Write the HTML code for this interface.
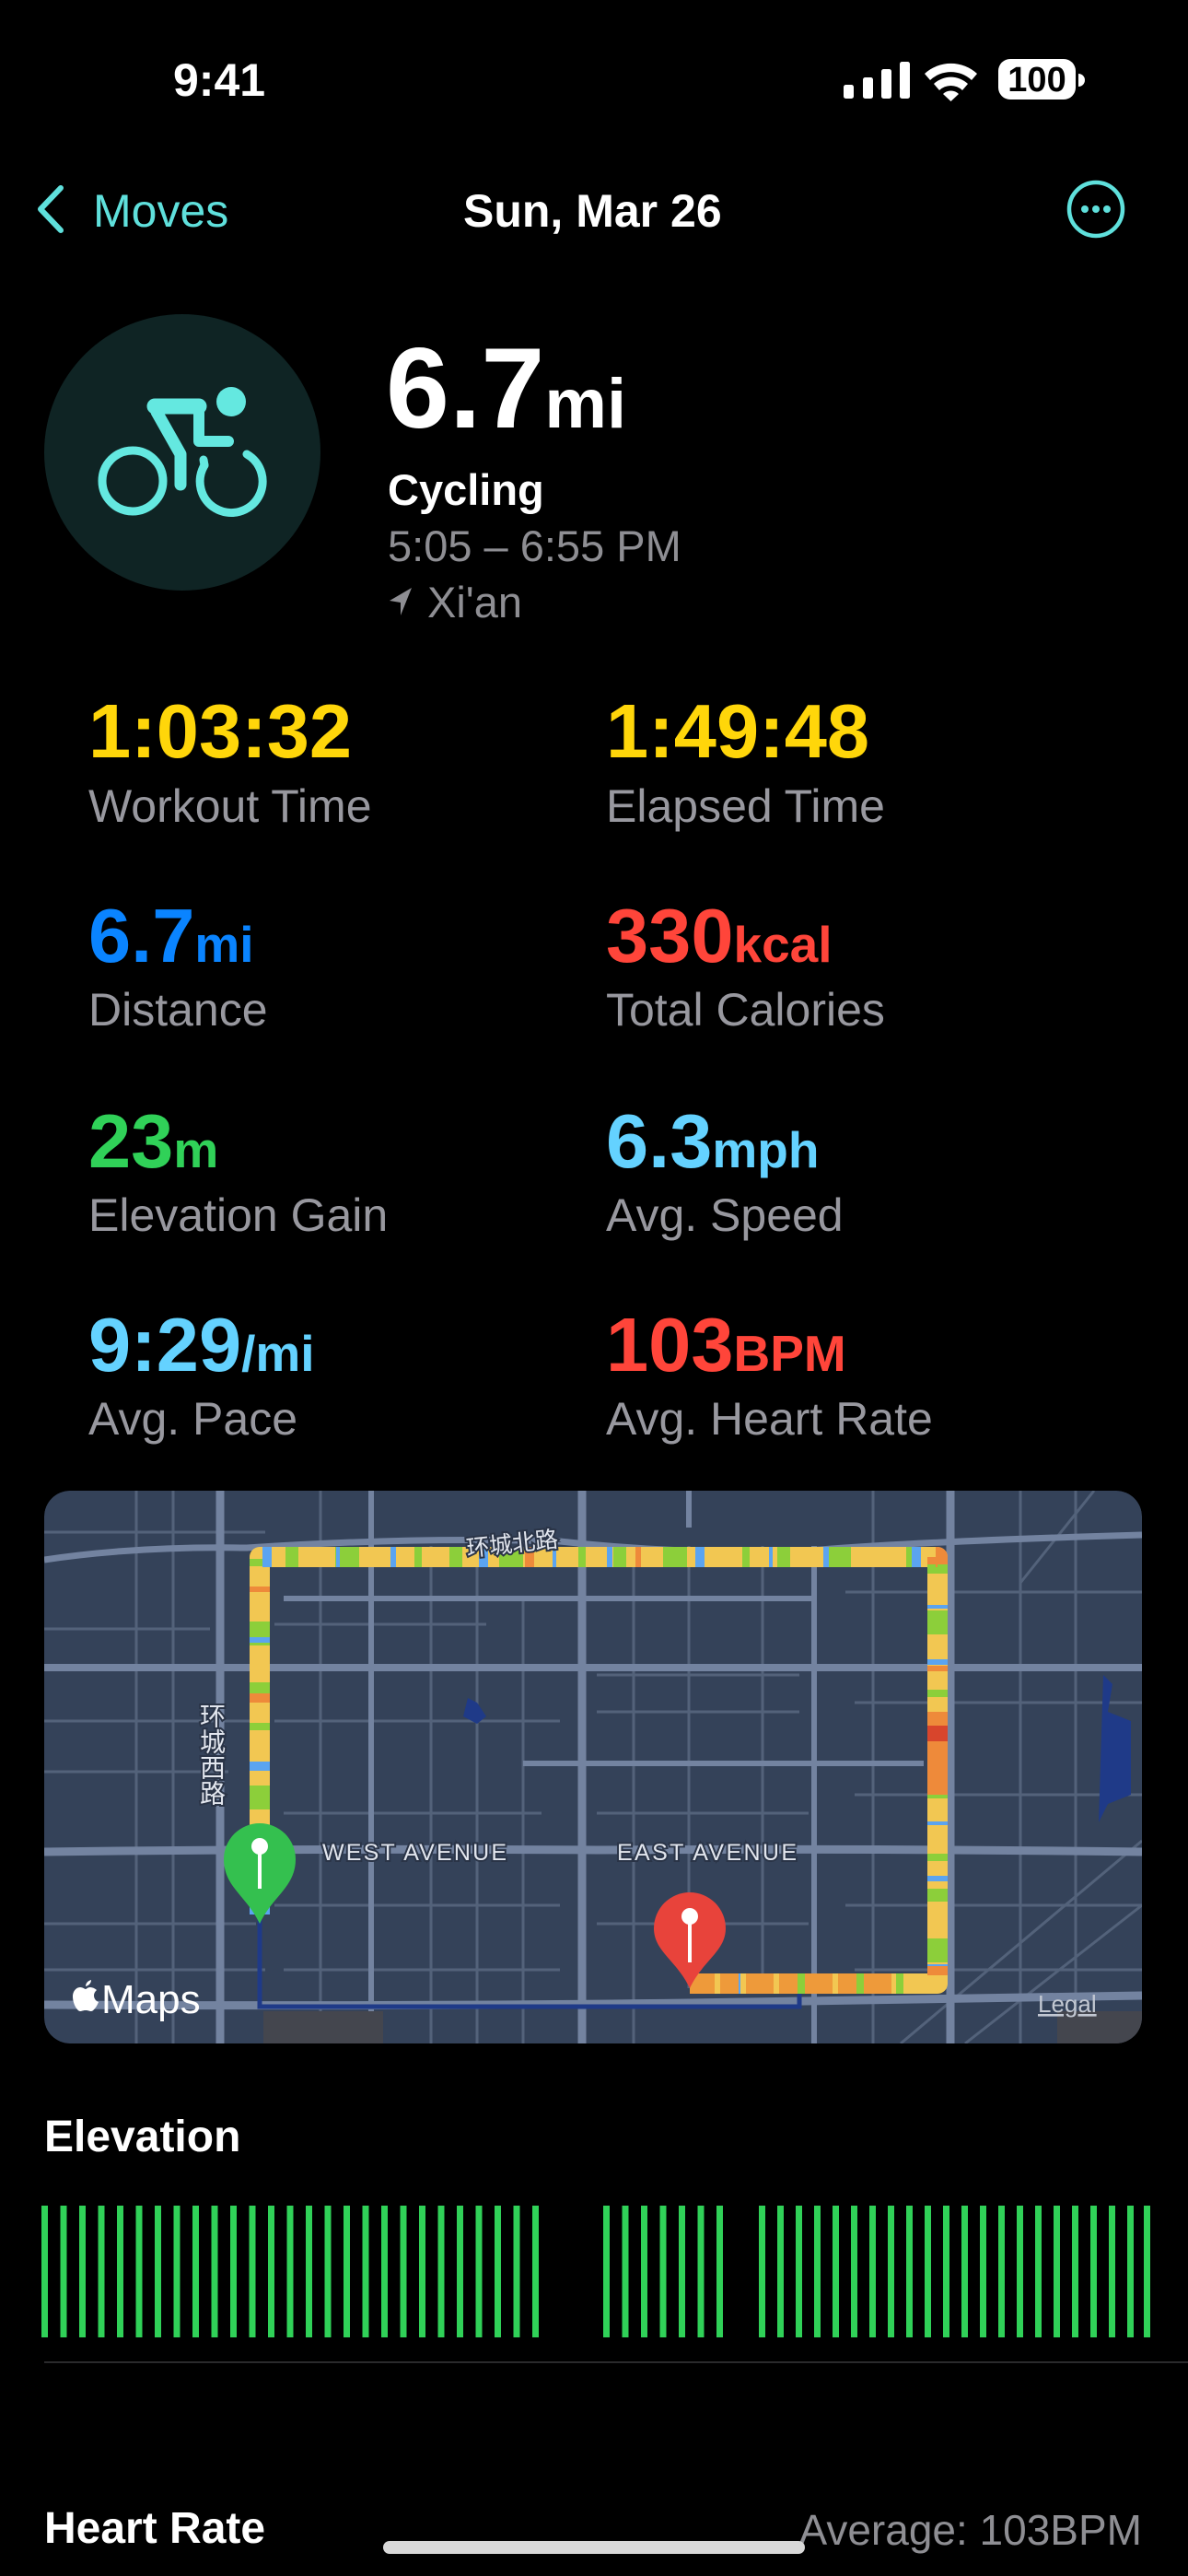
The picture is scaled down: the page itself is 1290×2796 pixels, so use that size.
<!DOCTYPE html>
<html><head><meta charset="utf-8">
<style>
*{margin:0;padding:0;box-sizing:border-box}
body{width:1290px;height:2796px;background:#000;position:relative;overflow:hidden;font-family:"Liberation Sans","Noto Sans CJK SC",sans-serif;color:#fff}
.t{position:absolute;line-height:1;white-space:nowrap}
.v{font-size:83px;font-weight:bold}
.v small{font-size:55px;font-weight:bold}
.l{font-size:50px;color:#98989f}
.y{color:#ffd60a}.b{color:#0a84ff}.r{color:#ff453a}.g{color:#30d158}.c{color:#64d2ff}
</style></head><body>
<!-- status bar -->
<div class="t" style="left:188px;top:62px;font-size:50px;font-weight:bold">9:41</div>
<svg style="position:absolute;left:0;top:0" width="1290" height="140">
<rect x="916" y="92" width="11" height="15" rx="2.5" fill="#fff"/>
<rect x="937" y="84" width="11" height="23" rx="2.5" fill="#fff"/>
<rect x="957" y="75" width="11" height="32" rx="2.5" fill="#fff"/>
<rect x="977" y="67" width="11" height="40" rx="2.5" fill="#fff"/>
<path d="M1004 80 A42 42 0 0 1 1061 80 L1055 87 A33 33 0 0 0 1010 87Z" fill="#fff"/>
<path d="M1014 91 A27 27 0 0 1 1051 91 L1045 98 A18 18 0 0 0 1020 98Z" fill="#fff"/>
<path d="M1024 102 A12 12 0 0 1 1041 102 L1032.5 110Z" fill="#fff"/>
<rect x="1084" y="64" width="84" height="44" rx="13" fill="#fff"/>
<path d="M1171 80 A7 7 0 0 1 1171 94Z" fill="#fff"/>
<text x="1126" y="99" text-anchor="middle" font-family="Liberation Sans" font-weight="bold" font-size="38" fill="#000">100</text>
</svg>
<!-- nav -->
<svg style="position:absolute;left:36px;top:198px" width="40" height="60"><path d="M30 6 L8 29 L30 52" stroke="#5fe0dc" stroke-width="6" fill="none" stroke-linecap="round" stroke-linejoin="round"/></svg>
<div class="t" style="left:101px;top:204px;font-size:50px;color:#5fe0dc">Moves</div>
<div class="t" style="left:503px;top:204px;font-size:50px;font-weight:bold">Sun, Mar 26</div>
<svg style="position:absolute;left:1157px;top:194px" width="66" height="66"><circle cx="33" cy="33" r="29" stroke="#5fe0dc" stroke-width="4.5" fill="none"/><circle cx="21" cy="33" r="4" fill="#5fe0dc"/><circle cx="33" cy="33" r="4" fill="#5fe0dc"/><circle cx="45" cy="33" r="4" fill="#5fe0dc"/></svg>
<!-- header -->
<svg style="position:absolute;left:48px;top:341px" width="300" height="300">
<circle cx="150" cy="150" r="150" fill="#0f2424"/>
<g fill="none" stroke="#64e8e0" stroke-linecap="round" stroke-linejoin="round">
<circle cx="96" cy="181" r="33" stroke-width="9"/>
<path d="M174 164 A34 34 0 1 0 220 152" stroke-width="9"/>
<path d="M174 164 L173 158" stroke-width="9"/>
<path d="M120 100 L168 100" stroke-width="17"/>
<path d="M168 100 L168 138 L200 138" stroke-width="12"/>
<path d="M122 106 L148 152 L148 185" stroke-width="13"/>
</g>
<circle cx="203" cy="95" r="16" fill="#64e8e0"/>
</svg>
<div class="t" style="left:419px;top:360px;font-size:124px;font-weight:bold">6.7<span style="font-size:76px;font-weight:bold">mi</span></div>
<div class="t" style="left:421px;top:508px;font-size:47px;font-weight:bold">Cycling</div>
<div class="t" style="left:421px;top:569px;font-size:47px;color:#8e8e93">5:05 – 6:55 PM</div>
<svg style="position:absolute;left:421px;top:636px" width="30" height="34"><path d="M26 2 L2 16 L14 18 L14 32 Z" fill="#8e8e93"/></svg>
<div class="t" style="left:464px;top:630px;font-size:47px;color:#8e8e93">Xi'an</div>
<!-- stats -->
<div class="t v y" style="left:96px;top:752px">1:03:32</div>
<div class="t l" style="left:96px;top:850px">Workout Time</div>
<div class="t v y" style="left:658px;top:752px">1:49:48</div>
<div class="t l" style="left:658px;top:850px">Elapsed Time</div>
<div class="t v b" style="left:96px;top:974px">6.7<small>mi</small></div>
<div class="t l" style="left:96px;top:1071px">Distance</div>
<div class="t v r" style="left:658px;top:974px">330<small>kcal</small></div>
<div class="t l" style="left:658px;top:1071px">Total Calories</div>
<div class="t v g" style="left:96px;top:1197px">23<small>m</small></div>
<div class="t l" style="left:96px;top:1294px">Elevation Gain</div>
<div class="t v c" style="left:658px;top:1197px">6.3<small>mph</small></div>
<div class="t l" style="left:658px;top:1294px">Avg. Speed</div>
<div class="t v c" style="left:96px;top:1418px">9:29<small>/mi</small></div>
<div class="t l" style="left:96px;top:1515px">Avg. Pace</div>
<div class="t v r" style="left:658px;top:1418px">103<small>BPM</small></div>
<div class="t l" style="left:658px;top:1515px">Avg. Heart Rate</div>
<!-- map -->
<svg style="position:absolute;left:48px;top:1618px;border-radius:28px" width="1192" height="600" viewBox="0 0 1192 600">
<defs><clipPath id="cp"><rect width="1192" height="600" rx="28"/></clipPath></defs>
<g clip-path="url(#cp)">
<rect width="1192" height="600" fill="#344259"/>
<g stroke="#53627a" stroke-width="3" fill="none">
<path d="M0 45 H240 M0 150 H180 M0 250 H240 M0 305 H200 M0 470 H230 M0 520 H240 M250 145 H480 M250 250 H560 M260 350 H540 M250 450 H560 M260 520 H560 M600 200 H820 M600 240 H820 M600 350 H830 M600 470 H830 M870 110 H1192 M880 230 H1192 M880 330 H1192 M870 450 H1192 M880 520 H1192"/>
<path d="M100 0 V600 M140 0 V600 M300 0 V600 M420 60 V600 M470 60 V600 M520 120 V600 M640 60 V600 M700 60 V540 M780 60 V540 M900 0 V600 M1060 0 V600 M1120 0 V600"/>
<path d="M930 600 L1192 380 M1000 600 L1192 450 M1060 100 L1140 0"/>
</g>
<g stroke="#7383a0" stroke-width="7" fill="none">
<path d="M0 75 Q100 60 220 62 Q400 50 560 55 Q700 70 830 65 Q950 55 1192 48"/>
<path d="M0 192 H1192" stroke-width="8"/>
<path d="M0 392 Q300 388 600 390 Q900 388 1192 392" stroke-width="9"/>
<path d="M0 558 Q400 560 700 556 Q1000 552 1192 548" stroke-width="9"/>
<path d="M260 117 H836" stroke-width="6"/>
<path d="M520 296 H955" stroke-width="6"/>
<path d="M191 0 V600" stroke-width="9"/>
<path d="M355 0 V600" stroke-width="6"/>
<path d="M584 0 V600" stroke-width="9"/>
<path d="M836 60 V600" stroke-width="6"/>
<path d="M984 0 V600" stroke-width="9"/>
<path d="M700 0 V40" stroke-width="6"/>
</g>
<rect x="238" y="565" width="130" height="40" fill="#44464e"/>
<rect x="1100" y="565" width="92" height="40" fill="#44464e"/>
<path d="M234 455 L234 560 H820 V540 H970" stroke="#1f3a88" stroke-width="5" fill="none"/>
<path d="M1150 200 l10 10 l-5 30 l25 10 v80 l-25 10 l-10 20 z" fill="#1f3a88"/>
<path d="M460 225 l10 5 l10 15 l-10 8 l-15 -8z" fill="#1f3a88"/>
<g fill="none" stroke-width="22" stroke-linejoin="round">
<path d="M234 400 V72 H970 V535 H701" stroke="#f2c752"/>
<path d="M234 400 V72 H970 V535 H701" stroke="#8ccf3a" stroke-dasharray="14 40 26 60 8 30"/>
<path d="M234 400 V72 H970 V535 H701" stroke="#5ba4f0" stroke-dasharray="6 90 10 70 4 55"/>
<path d="M234 400 V72 H970 V535 H701" stroke="#ee8a3a" stroke-dasharray="0 170 10 110 6 150"/>
<path d="M970 240 V330" stroke="#ee8a3a"/>
<path d="M970 255 V272" stroke="#d8452c"/>
<path d="M920 535 H701" stroke="#ee9a3a" stroke-dasharray="30 8 20 6"/>
<path d="M234 400 V460" stroke="#5ba4f0"/>
</g>
<g font-family="Liberation Sans,Noto Sans CJK SC,sans-serif" font-size="25" fill="#e2e6ee" stroke="#2a3447" stroke-width="4" paint-order="stroke">
<text x="458" y="66" transform="rotate(-6 510 56)" font-family="Noto Sans CJK SC,sans-serif">环城北路</text>
<text x="183" y="230" font-family="Noto Sans CJK SC,sans-serif" style="writing-mode:vertical-rl" font-size="28">环城西路</text>
<text x="302" y="401" textLength="200">WEST AVENUE</text>
<text x="622" y="401" textLength="195">EAST AVENUE</text>
</g>
<path d="M234 470 C220 440 195 430 195 400 A39 39 0 1 1 273 400 C273 430 248 440 234 470Z" fill="#34c04f"/>
<circle cx="234" cy="386" r="9" fill="#fff"/><path d="M234 392 V432" stroke="#fff" stroke-width="4"/>
<path d="M701 540 C687 510 662 500 662 475 A39 39 0 1 1 740 475 C740 500 715 510 701 540Z" fill="#e8433b"/>
<circle cx="701" cy="462" r="9" fill="#fff"/><path d="M701 468 V512" stroke="#fff" stroke-width="4"/>
<g transform="translate(30 531)" fill="#fff">
<path d="M20 8 C17 8 16 10 15 10 C14 10 12 8 9 8 C5 8 1 12 1 18 C1 26 6 34 9 34 C11 34 12 33 15 33 C18 33 19 34 21 34 C24 34 28 27 29 24 C26 23 24 20 24 17 C24 14 26 12 27 11 C25 9 22 8 20 8 Z"/>
<path d="M15 7 C15 4 17 1 21 0 C21 3 19 6 15 7 Z"/>
</g>
<text x="62" y="567" font-family="Liberation Sans" font-size="44" fill="#fff">Maps</text>
<text x="1079" y="566" font-family="Liberation Sans" font-size="26" fill="#c2c8d2" text-decoration="underline">Legal</text>
</g>
</svg>
<!-- elevation -->
<div class="t" style="left:48px;top:2296px;font-size:48px;font-weight:bold">Elevation</div>
<svg style="position:absolute;left:0;top:2394px" width="1290" height="145">
<g fill="#30d158">
<rect x="45" width="7" height="143"/><rect x="65.5" width="7" height="143"/><rect x="86" width="7" height="143"/><rect x="106.5" width="7" height="143"/><rect x="127" width="7" height="143"/><rect x="147.5" width="7" height="143"/><rect x="168" width="7" height="143"/><rect x="188.5" width="7" height="143"/><rect x="209" width="7" height="143"/><rect x="229.5" width="7" height="143"/><rect x="250" width="7" height="143"/><rect x="270.5" width="7" height="143"/><rect x="291" width="7" height="143"/><rect x="311.5" width="7" height="143"/><rect x="332" width="7" height="143"/><rect x="352.5" width="7" height="143"/><rect x="373" width="7" height="143"/><rect x="393.5" width="7" height="143"/><rect x="414" width="7" height="143"/><rect x="434.5" width="7" height="143"/><rect x="455" width="7" height="143"/><rect x="475.5" width="7" height="143"/><rect x="496" width="7" height="143"/><rect x="516.5" width="7" height="143"/><rect x="537" width="7" height="143"/><rect x="557.5" width="7" height="143"/><rect x="578" width="7" height="143"/>
<rect x="655" width="7" height="143"/><rect x="675.5" width="7" height="143"/><rect x="696" width="7" height="143"/><rect x="716.5" width="7" height="143"/><rect x="737" width="7" height="143"/><rect x="757.5" width="7" height="143"/><rect x="778" width="7" height="143"/>
<rect x="824" width="7" height="143"/><rect x="844" width="7" height="143"/><rect x="864" width="7" height="143"/><rect x="884" width="7" height="143"/><rect x="904" width="7" height="143"/><rect x="924" width="7" height="143"/><rect x="944" width="7" height="143"/><rect x="964" width="7" height="143"/><rect x="984" width="7" height="143"/><rect x="1004" width="7" height="143"/><rect x="1024" width="7" height="143"/><rect x="1044" width="7" height="143"/><rect x="1064" width="7" height="143"/><rect x="1084" width="7" height="143"/><rect x="1104" width="7" height="143"/><rect x="1124" width="7" height="143"/><rect x="1144" width="7" height="143"/><rect x="1164" width="7" height="143"/><rect x="1184" width="7" height="143"/><rect x="1204" width="7" height="143"/><rect x="1224" width="7" height="143"/><rect x="1242" width="7" height="143"/>
</g></svg>
<div style="position:absolute;left:48px;top:2563px;width:1242px;height:2px;background:#2a2a2c"></div>
<div class="t" style="left:48px;top:2721px;font-size:48px;font-weight:bold">Heart Rate</div>
<div class="t" style="right:50px;top:2723px;font-size:46px;color:#8e8e93">Average: 103BPM</div>
<div style="position:absolute;left:416px;top:2758px;width:458px;height:14px;border-radius:7px;background:#d8d8d8"></div>
</body></html>
